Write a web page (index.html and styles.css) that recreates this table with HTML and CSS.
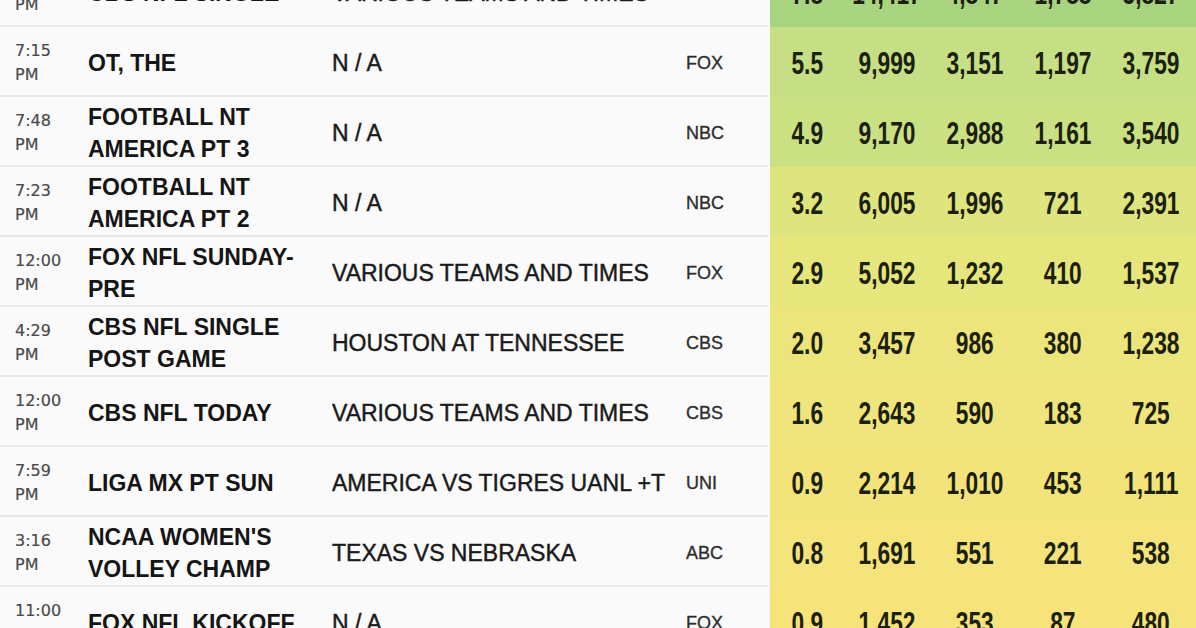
FILE: index.html
```html
<!DOCTYPE html>
<html lang="en">
<head>
<meta charset="utf-8">
<title>Sunday ratings</title>
<link rel="stylesheet" href="styles.css">
</head>
<body>
<div class="table">
  <div class="row r0">
    <div class="time">4:25<br>PM</div>
    <div class="title">CBS NFL SINGLE</div>
    <div class="desc">VARIOUS TEAMS AND TIMES</div>
    <div class="net">CBS</div>
    <div class="num"><span>7.8</span></div>
    <div class="num"><span>14,417</span></div>
    <div class="num"><span>4,847</span></div>
    <div class="num"><span>1,788</span></div>
    <div class="num"><span>5,827</span></div>
  </div>
  <div class="row r1">
    <div class="time">7:15<br>PM</div>
    <div class="title">OT, THE</div>
    <div class="desc">N / A</div>
    <div class="net">FOX</div>
    <div class="num"><span>5.5</span></div>
    <div class="num"><span>9,999</span></div>
    <div class="num"><span>3,151</span></div>
    <div class="num"><span>1,197</span></div>
    <div class="num"><span>3,759</span></div>
  </div>
  <div class="row r2">
    <div class="time">7:48<br>PM</div>
    <div class="title">FOOTBALL NT AMERICA PT 3</div>
    <div class="desc">N / A</div>
    <div class="net">NBC</div>
    <div class="num"><span>4.9</span></div>
    <div class="num"><span>9,170</span></div>
    <div class="num"><span>2,988</span></div>
    <div class="num"><span>1,161</span></div>
    <div class="num"><span>3,540</span></div>
  </div>
  <div class="row r3">
    <div class="time">7:23<br>PM</div>
    <div class="title">FOOTBALL NT AMERICA PT 2</div>
    <div class="desc">N / A</div>
    <div class="net">NBC</div>
    <div class="num"><span>3.2</span></div>
    <div class="num"><span>6,005</span></div>
    <div class="num"><span>1,996</span></div>
    <div class="num"><span>721</span></div>
    <div class="num"><span>2,391</span></div>
  </div>
  <div class="row r4">
    <div class="time">12:00<br>PM</div>
    <div class="title">FOX NFL SUNDAY-PRE</div>
    <div class="desc">VARIOUS TEAMS AND TIMES</div>
    <div class="net">FOX</div>
    <div class="num"><span>2.9</span></div>
    <div class="num"><span>5,052</span></div>
    <div class="num"><span>1,232</span></div>
    <div class="num"><span>410</span></div>
    <div class="num"><span>1,537</span></div>
  </div>
  <div class="row r5">
    <div class="time">4:29<br>PM</div>
    <div class="title">CBS NFL SINGLE POST GAME</div>
    <div class="desc">HOUSTON AT TENNESSEE</div>
    <div class="net">CBS</div>
    <div class="num"><span>2.0</span></div>
    <div class="num"><span>3,457</span></div>
    <div class="num"><span>986</span></div>
    <div class="num"><span>380</span></div>
    <div class="num"><span>1,238</span></div>
  </div>
  <div class="row r6">
    <div class="time">12:00<br>PM</div>
    <div class="title">CBS NFL TODAY</div>
    <div class="desc">VARIOUS TEAMS AND TIMES</div>
    <div class="net">CBS</div>
    <div class="num"><span>1.6</span></div>
    <div class="num"><span>2,643</span></div>
    <div class="num"><span>590</span></div>
    <div class="num"><span>183</span></div>
    <div class="num"><span>725</span></div>
  </div>
  <div class="row r7">
    <div class="time">7:59<br>PM</div>
    <div class="title">LIGA MX PT SUN</div>
    <div class="desc">AMERICA VS TIGRES UANL +T</div>
    <div class="net">UNI</div>
    <div class="num"><span>0.9</span></div>
    <div class="num"><span>2,214</span></div>
    <div class="num"><span>1,010</span></div>
    <div class="num"><span>453</span></div>
    <div class="num"><span>1,111</span></div>
  </div>
  <div class="row r8">
    <div class="time">3:16<br>PM</div>
    <div class="title">NCAA WOMEN'S VOLLEY CHAMP</div>
    <div class="desc">TEXAS VS NEBRASKA</div>
    <div class="net">ABC</div>
    <div class="num"><span>0.8</span></div>
    <div class="num"><span>1,691</span></div>
    <div class="num"><span>551</span></div>
    <div class="num"><span>221</span></div>
    <div class="num"><span>538</span></div>
  </div>
  <div class="row r9">
    <div class="time">11:00<br>AM</div>
    <div class="title">FOX NFL KICKOFF</div>
    <div class="desc">N / A</div>
    <div class="net">FOX</div>
    <div class="num"><span>0.9</span></div>
    <div class="num"><span>1,452</span></div>
    <div class="num"><span>353</span></div>
    <div class="num"><span>87</span></div>
    <div class="num"><span>480</span></div>
  </div>
</div>
</body>
</html>
```

FILE: styles.css
```css
html, body {
  margin: 0;
  padding: 0;
  background: #fafafa;
  overflow: hidden;
}

.table {
  margin-top: -43px;
  width: 1196px;
}

.row {
  display: grid;
  grid-template-columns: 88px 244px 354px 82px 76px 86px 90px 86px 90px;
  grid-template-rows: 70px;
  height: 70px;
  align-items: stretch;
}

.time, .title, .desc, .net {
  display: flex;
  align-items: center;
  padding-top: 4px;
  border-bottom: 2px solid #e7e7e7;
  box-sizing: border-box;
  background: #fafafa;
  overflow: hidden;
}

.time {
  padding-left: 15px;
  font-family: "DejaVu Sans", sans-serif;
  font-size: 16px;
  line-height: 24px;
  color: #4a4a4a;
  -webkit-text-stroke: 0.2px #4a4a4a;
}

.title {
  padding-right: 12px;
  font-family: "Liberation Sans", Arial, sans-serif;
  font-weight: bold;
  font-size: 23px;
  line-height: 32px;
  color: #151515;
}

.desc {
  font-family: "Liberation Sans", Arial, sans-serif;
  font-size: 23px;
  color: #1a1a1a;
  -webkit-text-stroke: 0.45px #1a1a1a;
  white-space: nowrap;
}

.net {
  font-family: "Liberation Sans", Arial, sans-serif;
  font-size: 18px;
  color: #2e2e2e;
  -webkit-text-stroke: 0.35px #2e2e2e;
}

.num {
  display: flex;
  align-items: center;
  justify-content: center;
  padding-top: 3px;
  box-sizing: border-box;
  font-family: "Liberation Sans", Arial, sans-serif;
  font-weight: bold;
  font-size: 32px;
  color: #1b200f;
}

.num span {
  display: inline-block;
  transform: scaleX(0.71);
  white-space: nowrap;
}

.r0 .num { background: #a9d47f; }
.r1 .num { background: #c6df85; }
.r2 .num { background: #c9e083; }
.r3 .num { background: #dee57e; }
.r4 .num { background: #e5e67c; }
.r5 .num { background: #ece57c; }
.r6 .num { background: #efe57c; }
.r7 .num { background: #f2e47b; }
.r8 .num { background: #f4e47b; }
.r9 .num { background: #f6e47b; }

.row .num:nth-child(5) { border-left: 2px solid #fafafa; }
```
